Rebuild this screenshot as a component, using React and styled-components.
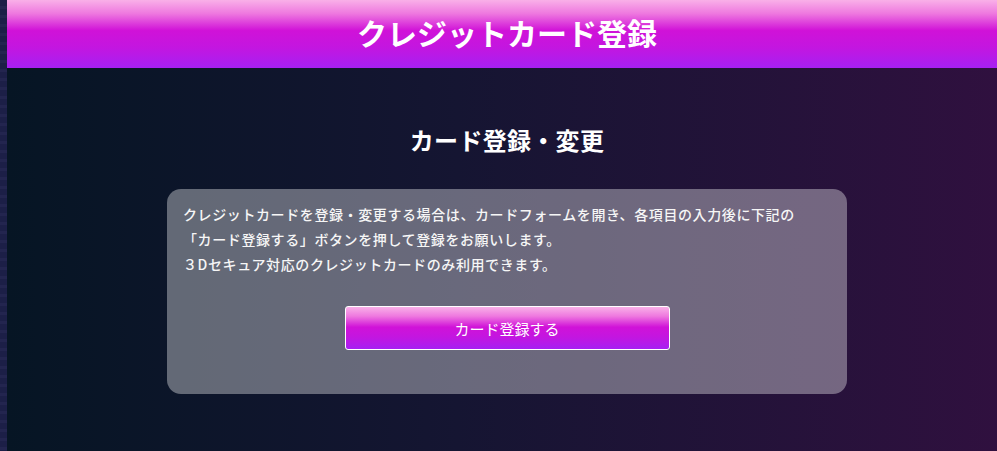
import React from "react";
import styled, { createGlobalStyle } from "styled-components";

const Global = createGlobalStyle`
  html, body { margin: 0; padding: 0; height: 100%; }
  body {
    overflow: hidden;
    background: #061423;
    font-family: "Noto Sans CJK JP", "Noto Sans", sans-serif;
  }
  #root { height: 100%; }
`;

const Page = styled.div`
  display: flex;
  height: 451px;
  width: 1007px;
`;

const SideStrip = styled.div`
  flex: 0 0 7px;
  background: repeating-linear-gradient(
    to bottom,
    #1c1f47 0px,
    #1c1f47 6px,
    #23254f 6px,
    #23254f 9px
  );
`;

const Main = styled.main`
  flex: 0 0 1000px;
  display: flex;
  flex-direction: column;
  align-items: center;
  background: linear-gradient(to right, #061524 0%, #151532 45%, #30103f 100%);
`;

const Header = styled.header`
  align-self: stretch;
  height: 68px;
  display: flex;
  align-items: center;
  justify-content: center;
  background: linear-gradient(
    to bottom,
    #f9b0e8 0%,
    #ee78df 20%,
    #d012d8 45%,
    #c316e0 70%,
    #a620f2 100%
  );
`;

const Title = styled.h1`
  margin: 0 0 5px;
  font-size: 30px;
  font-weight: 700;
  color: #ffffff;
  line-height: 1;
`;

const SubTitle = styled.h2`
  margin: 54px 0 0;
  font-size: 24px;
  letter-spacing: 0.3px;
  line-height: 36px;
  font-weight: 700;
  color: #ffffff;
`;

const Card = styled.section`
  margin-top: 31px;
  width: 680px;
  box-sizing: border-box;
  padding: 13px 16px 44px;
  border-radius: 14px;
  background: rgba(255, 255, 255, 0.36);
  display: flex;
  flex-direction: column;
  align-items: center;
`;

const Notice = styled.p`
  align-self: stretch;
  margin: 0;
  font-size: 14px;
  font-weight: 500;
  letter-spacing: 0.6px;
  line-height: 25px;
  color: #f6f6f6;
`;

const RegisterButton = styled.button`
  margin-top: 29px;
  width: 325px;
  height: 44px;
  border: 1px solid #ffffff;
  border-radius: 3px;
  color: #ffffff;
  font-family: inherit;
  font-size: 15px;
  cursor: pointer;
  background: linear-gradient(
    to bottom,
    #f9b0e8 0%,
    #ee78df 22%,
    #d012d8 48%,
    #c316e0 72%,
    #a620f2 100%
  );
`;

export default function App() {
  return (
    <>
      <Global />
      <Page>
        <SideStrip />
        <Main>
          <Header>
            <Title>クレジットカード登録</Title>
          </Header>
          <SubTitle>カード登録・変更</SubTitle>
          <Card>
            <Notice>
              クレジットカードを登録・変更する場合は、カードフォームを開き、各項目の入力後に下記の
              <br />
              「カード登録する」ボタンを押して登録をお願いします。
              <br />
              ３Dセキュア対応のクレジットカードのみ利用できます。
            </Notice>
            <RegisterButton type="button">カード登録する</RegisterButton>
          </Card>
        </Main>
      </Page>
    </>
  );
}
